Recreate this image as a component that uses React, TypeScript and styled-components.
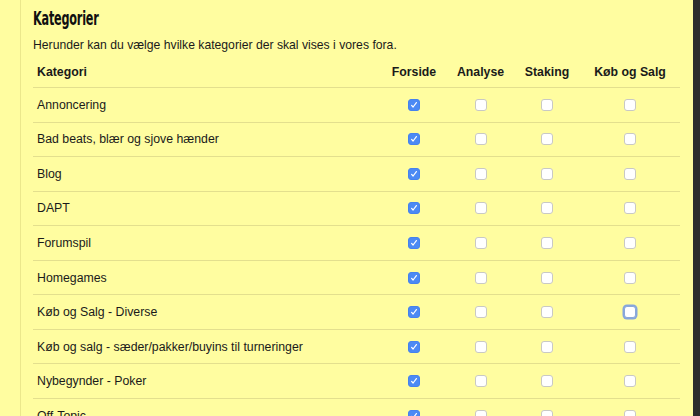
import React, {FC} from 'react'
import styled, {createGlobalStyle, css} from 'styled-components'

const GlobalStyle = createGlobalStyle`
    html, body {
        margin: 0;
        padding: 0;
        height: 416px;
        overflow: hidden;
        background: #fffda0;
    }
`

const Page = styled.div`
    display: flex;
    flex-direction: row;
    width: 700px;
    height: 416px;
    background: #fffda0;
    font-family: "Liberation Sans", Arial, sans-serif;
    color: #1a1a1a;
`

const Content = styled.div`
    flex: 1;
    margin-left: 20px;
    border-left: 1px solid #ebe78c;
    padding: 7px 0 0 12px;
`

const SideBar = styled.div`
    width: 7px;
    background: #2e2e2e;
`

const Title = styled.h1`
    display: inline-block;
    margin: 0;
    font-family: "DejaVu Sans Condensed", "DejaVu Sans", sans-serif;
    font-weight: bold;
    font-size: 19.5px;
    line-height: 24px;
    letter-spacing: -0.3px;
    color: #111;
    transform: scaleX(0.64);
    transform-origin: left center;
`

const Intro = styled.p`
    margin: 6px 0 0 0;
    font-size: 12.2px;
    line-height: 16px;
`

const Table = styled.div`
    width: 647px;
    margin-top: 8px;
`

const Row = styled.div<{$header?: boolean}>`
    display: grid;
    grid-template-columns: 348px 66px 67px 66px 100px;
    align-items: center;
    box-sizing: border-box;
    border-bottom: 1px solid #e3df8e;
    font-size: 12.3px;
    line-height: 16px;
    height: 34.55px;
    ${p => p.$header && css`
        height: 27px;
        align-items: start;
        padding-top: 3px;
        font-weight: bold;
    `}
`

const NameCell = styled.div`
    padding-left: 4px;
    white-space: nowrap;
`

const CenterCell = styled.div`
    display: flex;
    justify-content: center;
`

const Box = styled.span<{$checked?: boolean, $focused?: boolean}>`
    display: inline-block;
    position: relative;
    box-sizing: border-box;
    width: 12px;
    height: 12px;
    border-radius: 3px;
    background: #fff;
    border: 1px solid #c9c9c4;
    ${p => p.$checked && css`
        background: #4c8af4;
        border-color: #4582ee;
    `}
    ${p => p.$focused && css`
        border: 1px solid #8aa8d8;
        box-shadow: 0 0 0 1.5px #86a6dc;
    `}
    svg {
        position: absolute;
        left: 1px;
        top: 1px;
    }
`

const Check: FC<{checked?: boolean, focused?: boolean}> = ({checked, focused}) => (
    <Box $checked={checked} $focused={focused}>
        {checked && (
            <svg width="8" height="8" viewBox="0 0 8 8">
                <path d="M1.6 4.4 L3.1 6 L6.4 1.6" fill="none" stroke="#fff" strokeWidth="1.2" strokeLinecap="round" strokeLinejoin="round" />
            </svg>
        )}
    </Box>
)

const categories = [
    'Annoncering',
    'Bad beats, blær og sjove hænder',
    'Blog',
    'DAPT',
    'Forumspil',
    'Homegames',
    'Køb og Salg - Diverse',
    'Køb og salg - sæder/pakker/buyins til turneringer',
    'Nybegynder - Poker',
    'Off-Topic',
]

const App: FC = () => {
    return <>
        <GlobalStyle />
        <Page>
            <Content>
                <Title>Kategorier</Title>
                <Intro>Herunder kan du vælge hvilke kategorier der skal vises i vores fora.</Intro>
                <Table>
                    <Row $header>
                        <NameCell>Kategori</NameCell>
                        <CenterCell>Forside</CenterCell>
                        <CenterCell>Analyse</CenterCell>
                        <CenterCell>Staking</CenterCell>
                        <CenterCell>Køb og Salg</CenterCell>
                    </Row>
                    {categories.map((name, i) => (
                        <Row key={name}>
                            <NameCell>{name}</NameCell>
                            <CenterCell><Check checked /></CenterCell>
                            <CenterCell><Check /></CenterCell>
                            <CenterCell><Check /></CenterCell>
                            <CenterCell><Check focused={i == 6} /></CenterCell>
                        </Row>
                    ))}
                </Table>
            </Content>
            <SideBar />
        </Page>
    </>
}

export default App
